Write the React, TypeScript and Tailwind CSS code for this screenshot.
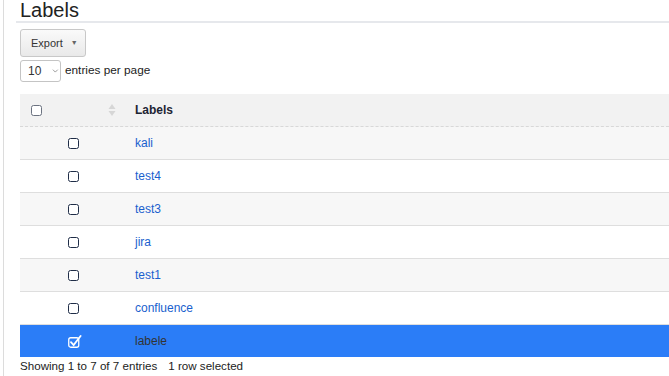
import { ChevronDown } from 'lucide-react';

const LABELS = ['kali', 'test4', 'test3', 'jira', 'test1', 'confluence'];

function Box({ checked = false, light = false }: { checked?: boolean; light?: boolean }) {
  if (checked) {
    return (
      <svg width="14" height="13" viewBox="0 0 14 13" className="block">
        <rect x="0.75" y="2.75" width="10" height="9.5" rx="2" fill="none" stroke="#fff" strokeWidth="1.3" />
        <path d="M3 7.2 L5.6 10 L12.6 1" fill="none" stroke="#fff" strokeWidth="1.8" strokeLinecap="round" />
      </svg>
    );
  }
  return (
    <span
      className={`block h-[11px] w-[11px] rounded-[2.5px] border bg-white ${
        light ? 'border-[#6b7280]' : 'border-[#1f2d47]'
      }`}
    />
  );
}

export default function App() {
  return (
    <div className="h-[376px] w-[669px] overflow-hidden bg-white font-['Liberation_Sans',Arial,sans-serif] text-[#333]">
      <div className="ml-[3px] h-full border-l border-[#dcdcdc] pl-[12px]">
        <div className="border-b-2 border-[#e6e8ec] pb-[1px] pl-[4px] text-[20px] leading-[20px] text-[#222]">
          Labels
        </div>
        <div className="pl-[4px]">
          <button className="mt-[6px] flex h-[28px] w-[66px] items-center rounded-[3px] border border-[#c8c8c8] bg-gradient-to-b from-[#fafafa] to-[#e9e9e9] pl-[10px] text-[11px] text-[#333]">
            Export
            <span className="ml-[8px] text-[7px] text-[#666]">▼</span>
          </button>
          <div className="mt-[3px] flex items-center">
            <div className="flex h-[22px] w-[41px] items-center rounded-[3px] border border-[#c4c4c4] pl-[7px] text-[12px]">
              10
              <ChevronDown size={10} strokeWidth={1.6} className="ml-[10px] text-[#555]" />
            </div>
            <span className="ml-[4px] text-[11.8px] text-[#222]">entries per page</span>
          </div>
          <div className="mt-[12px]">
            <div className="flex h-[33px] items-center border-b border-dashed border-[#d8d8d8] bg-[#f2f2f2]">
              <div className="w-[48px] pl-[11px]">
                <Box light />
              </div>
              <div className="flex w-[67px] justify-center pl-[20px]">
                <svg width="8" height="14" viewBox="0 0 8 14">
                  <path d="M4 1 L7.5 6 L0.5 6 Z" fill="#d6d6d6" />
                  <path d="M4 13 L7.5 8 L0.5 8 Z" fill="#d6d6d6" />
                </svg>
              </div>
              <div className="text-[12px] font-bold text-[#1c2434]">Labels</div>
            </div>
            {LABELS.map((label, i) => (
              <div
                key={label}
                className={`flex h-[33px] items-center border-b border-[#dedede] ${
                  i % 2 === 0 ? 'bg-[#f7f7f7]' : 'bg-white'
                }`}
              >
                <div className="w-[115px] pl-[48px]">
                  <Box />
                </div>
                <div className="text-[12px] text-[#1a5fce]">{label}</div>
              </div>
            ))}
            <div className="flex h-[32px] items-center bg-[#2b7df7]">
              <div className="w-[115px] pl-[48px]">
                <Box checked />
              </div>
              <div className="text-[12px] text-[#333]">labele</div>
            </div>
          </div>
          <div className="mt-[1px] text-[11.6px] leading-[16px] text-[#222]">
            Showing 1 to 7 of 7 entries<span className="ml-[11px]">1 row selected</span>
          </div>
        </div>
      </div>
    </div>
  );
}
